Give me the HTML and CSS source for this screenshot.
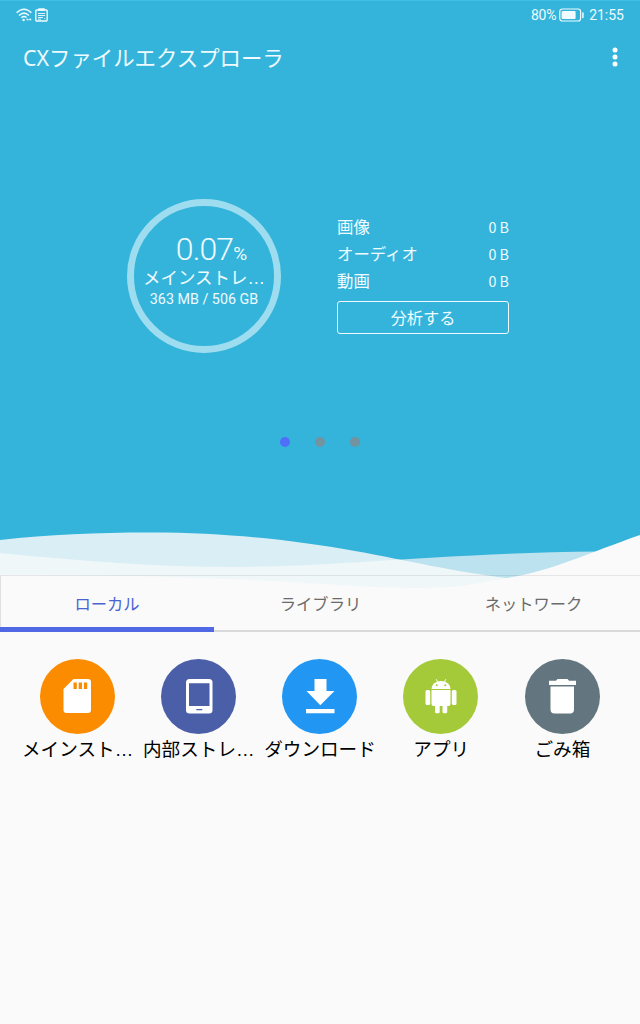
FILE: index.html
```
<!DOCTYPE html>
<html lang="ja">
  <head>
    <meta charset="UTF-8" />
    <meta name="viewport" content="width=device-width, initial-scale=1" />
    <title>CXファイルエクスプローラ</title>
    <link rel="stylesheet" href="styles.css">
  </head>
  <body>
    <header class="hero">
      <div class="status-bar">
        <div class="status-icons">
          <svg width="16" height="14" viewBox="0 0 16 14" fill="none" stroke="currentColor" stroke-width="1.5">
            <path d="M.6 4.800Q8-2.300 15.400 4.800M3 7.500Q8 2.800 13 7.500M5.300 9.800Q8 7.500 10.500 9.600" />
            <circle cx="7.600" cy="12" r="1.200" fill="currentColor" stroke="none" />
            <path d="M10.500 11.600h5" stroke-dasharray="2 .7" />
          </svg>
          <svg width="13" height="14" viewBox="0 0 13 14" fill="none" stroke="currentColor">
            <rect x=".8" y="2" width="11.400" height="11" rx="1" stroke-width="1.400" />
            <path d="M3.500 2.300V.8h6v1.500z" fill="currentColor" />
            <path d="M3 5.500h7M3 7.500h7M3 9.500h5M3 11.200h3M9.200 10.500h1" stroke-width=".9" />
          </svg>
        </div>
        <div class="status-info">
          <span class="battery">80%</span>
          <svg width="26" height="14" viewBox="0 0 26 14">
            <rect x=".8" y="1" width="20.800" height="12" rx="2.500" fill="none" stroke="currentColor" stroke-width="1.200" />
            <rect x="2.600" y="2.900" width="14" height="8.200" rx="1" fill="currentColor" />
            <rect x="23.200" y="4.200" width="1.500" height="6" rx=".7" fill="currentColor" />
          </svg>
          <span class="clock">21:55</span>
        </div>
      </div>

      <div class="app-bar">
        <h1>CXファイルエクスプローラ</h1>
        <svg class="more" width="6" height="20" viewBox="0 0 6 20" fill="currentColor">
          <circle cx="3" cy="3" r="2.500" />
          <circle cx="3" cy="10" r="2.500" />
          <circle cx="3" cy="17" r="2.500" />
        </svg>
      </div>

      <div class="summary">
        <div class="usage">
          <div class="percent">0.07<small>%</small></div>
          <div class="storage-name">メインストレ<span class="ellipsis">…</span></div>
          <div class="storage-size">363 MB / 506 GB</div>
        </div>
        <div class="breakdown">
          <div class="row"><span>画像</span><b>0 B</b></div>
          <div class="row"><span>オーディオ</span><b>0 B</b></div>
          <div class="row"><span>動画</span><b>0 B</b></div>
          <button class="analyze">分析する</button>
        </div>
      </div>

      <div class="dots">
        <i class="active"></i><i></i><i></i>
      </div>

      <!-- waves run a little way down behind the tabs -->
      <svg class="waves" width="640" height="75" viewBox="0 0 640 75">
        <path fill="#bbe2ee" d="M0 28C80 36 160 42 230 42C340 42 440 28 600 26.500L640 26V75H0Z" />
        <path fill="#fafafa" fill-opacity=".84" d="M0 15C50 9.500 95 7.500 150 7.500C230 7.500 300 16 355 26C410 36 450 46 507 53V75H0Z" />
        <path fill="#fafafa" d="M0 50C110 50 200 52 280 56.500C345 60 390 64.500 443 62.500C470 61.500 485 56 507 53C555 45 588 28 640 10V75H0Z" />
      </svg>
    </header>

    <nav class="tabs">
      <a class="tab active">ローカル</a>
      <a class="tab">ライブラリ</a>
      <a class="tab">ネットワーク</a>
    </nav>

    <main class="shortcuts">
      <div class="shortcut">
        <div class="icon sd">
          <svg width="36" height="36" viewBox="0 0 36 36">
            <path fill="#fff" d="M14.500 1H29a3 3 0 0 1 3 3v28a3 3 0 0 1-3 3H7.500a3 3 0 0 1-3-3V11z" />
            <path fill="#fb8c00" d="M14.500 4.500h3.300V11h-3.300zM19.700 4.500H23V11h-3.300zM24.900 4.500h3.300V11h-3.300z" />
          </svg>
        </div>
        <span>メインスト<span class="ellipsis">…</span></span>
      </div>
      <div class="shortcut">
        <div class="icon tablet">
          <svg width="36" height="36" viewBox="0 0 36 36">
            <rect x="5" y="1" width="26.500" height="34.500" rx="3.500" fill="#fff" />
            <path fill="#4b5fa8" d="M8 5.300h20.500V28H8zM15.300 31h6v1.300h-6z" />
          </svg>
        </div>
        <span>内部ストレ<span class="ellipsis">…</span></span>
      </div>
      <div class="shortcut">
        <div class="icon download">
          <svg width="36" height="36" viewBox="0 0 36 36" fill="#fff">
            <path d="M12.500 1h12v12h8L18.300 27.200 4.500 13h8zM4 31h28.500v4.300H4z" />
          </svg>
        </div>
        <span>ダウンロード</span>
      </div>
      <div class="shortcut">
        <div class="icon apps">
          <svg width="36" height="36" viewBox="0 0 36 36" fill="#fff">
            <path d="M8.500 11a9.500 8 0 0 1 19 0z" />
            <path d="M13.200 1.200l1.500 3M22.800 1.200l-1.500 3" stroke="#fff" stroke-width=".9" />
            <path d="M8.500 12h19V26a2 2 0 0 1-2 2h-15a2 2 0 0 1-2-2z" />
            <rect x="2.500" y="12" width="4.700" height="15" rx="1.500" />
            <rect x="28.800" y="12" width="4.700" height="15" rx="1.500" />
            <rect x="12" y="24" width="4.700" height="11.300" rx="1.500" />
            <rect x="19.500" y="24" width="4.700" height="11.300" rx="1.500" />
            <circle cx="13.800" cy="7.300" r="1" fill="#a4ca39" />
            <circle cx="22.200" cy="7.300" r="1" fill="#a4ca39" />
          </svg>
        </div>
        <span>アプリ</span>
      </div>
      <div class="shortcut">
        <div class="icon trash">
          <svg width="36" height="36" viewBox="0 0 36 36" fill="#fff">
            <path d="M5 2.800h7L13.500 1h10L25 2.800h7V7H5zM6.500 8.500H30V31.500a4 4 0 0 1-4 4H10.500a4 4 0 0 1-4-4z" />
          </svg>
        </div>
        <span>ごみ箱</span>
      </div>
    </main>
  </body>
</html>
```
FILE: styles.css
```
* {
  box-sizing: border-box;
}
body {
  margin: 0;
  min-height: 1024px;
  background-color: #fafafa;
  color: #111;
  font-family: "Noto Sans", "Noto Sans CJK JP", sans-serif;
}
.hero {
  position: relative;
  height: 575px;
  background-color: #35b4db;
  border-top: 1px solid #43bfe6;
  color: #effbff;
}
.status-bar {
  display: flex;
  justify-content: space-between;
  align-items: center;
  height: 28px;
  padding: 0 16px;
  font-family: Roboto, sans-serif;
  font-size: 14px;
}
.status-icons,
.status-info {
  display: flex;
  align-items: center;
  gap: 3px;
}
.battery {
  letter-spacing: -0.3px;
}
.clock {
  margin-left: 1px;
}
.app-bar {
  display: flex;
  justify-content: space-between;
  align-items: center;
  height: 56px;
  padding: 0 22px 0 23px;
}
.app-bar h1 {
  margin: 0;
  padding-top: 2px;
  font-size: 21.4px;
  font-weight: 400;
  line-height: 30px;
}
.more {
  color: #fff;
}
.summary {
  display: flex;
  align-items: flex-start;
  gap: 56px;
  margin: 114px 0 0 127px;
}
.usage {
  width: 154px;
  height: 154px;
  padding-top: 26px;
  border: 7px solid #9eddf0;
  border-radius: 50%;
  text-align: center;
  white-space: nowrap;
}
.percent {
  padding-left: 14px;
  font-family: Roboto, sans-serif;
  font-size: 32px;
  font-weight: 300;
  letter-spacing: -0.9px;
  line-height: 34px;
}
.percent small {
  font-size: 19px;
  font-weight: 400;
}
.storage-name {
  margin-top: -4px;
  font-size: 17.5px;
  line-height: 20px;
}
.ellipsis {
  font-family: "Liberation Sans", sans-serif;
}
.storage-size {
  font-family: Roboto, sans-serif;
  font-size: 14.3px;
  line-height: 22px;
}
.breakdown {
  width: 172px;
  padding-top: 14px;
}
.row {
  display: flex;
  justify-content: space-between;
  align-items: center;
  height: 27px;
  font-size: 16.4px;
  line-height: 27px;
}
.row b {
  font-family: "Noto Sans CJK JP", sans-serif;
  font-size: 14.3px;
  font-weight: 400;
}
.analyze {
  display: block;
  width: 100%;
  height: 33px;
  margin-top: 7px;
  padding: 0;
  border: 1px solid #effbff;
  border-radius: 3px;
  background: none;
  color: inherit;
  font: inherit;
  font-size: 16.2px;
  line-height: 30px;
}
.dots {
  display: flex;
  justify-content: center;
  gap: 25px;
  margin-top: 84px;
}
.dots i {
  width: 10px;
  height: 10px;
  border-radius: 50%;
  background-color: #72939f;
}
.dots .active {
  background-color: #506efa;
}
.waves {
  position: absolute;
  left: 0;
  top: 524px;
}
.tabs {
  position: relative;
  display: grid;
  grid-template-columns: repeat(3, 1fr);
  height: 57px;
  border-top: 1px solid rgba(0, 0, 0, 0.08);
  border-left: 1px solid rgba(0, 0, 0, 0.1);
  box-shadow: inset 0 -2px #d9d9d9;
}
.tab {
  display: flex;
  align-items: center;
  justify-content: center;
  color: #6b6b6b;
  font-size: 16.3px;
  line-height: 24px;
}
.tab.active {
  margin-left: -1px;
  border-bottom: 5px solid #5068e4;
  padding-top: 5px;
  color: #4a63d3;
}
.shortcuts {
  display: grid;
  grid-template-columns: repeat(5, 121.2px);
  justify-content: center;
  padding-top: 26.5px;
}
.shortcut {
  display: flex;
  flex-direction: column;
  align-items: center;
  font-size: 18.6px;
  line-height: 29px;
  color: #000;
  white-space: nowrap;
}
.icon {
  display: flex;
  align-items: center;
  justify-content: center;
  width: 75px;
  height: 75px;
  margin-left: -0.5px;
  border-radius: 50%;
}
.sd {
  background-color: #fb8c00;
}
.tablet {
  background-color: #4b5fa8;
}
.download {
  background-color: #2196f3;
}
.apps {
  background-color: #a4ca39;
}
.trash {
  background-color: #637680;
}
```
